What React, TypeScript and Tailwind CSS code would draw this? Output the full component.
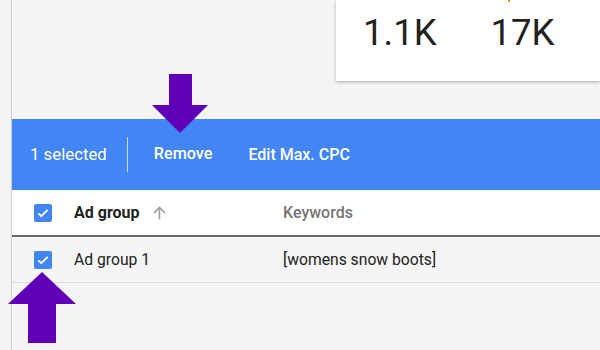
import React from 'react'

const font = { fontFamily: 'Roboto, "Liberation Sans", sans-serif' }

const Check: React.FC = () => (
  <div className="w-[18px] h-[18px] rounded-[2px] bg-[#4285f4] flex items-center justify-center">
    <svg width="14" height="14" viewBox="0 0 24 24" fill="none" stroke="white" strokeWidth="3">
      <path d="M4 12.5l5 5L20 6.5" />
    </svg>
  </div>
)

export default function App() {
  return (
    <div className="relative w-[600px] h-[350px] overflow-hidden bg-[#f4f4f4] flex" style={font}>
      <div className="w-[11px] shrink-0" />
      <div className="flex-1 border-l border-[#cfcfcf] flex flex-col">
        {/* stats card */}
        <div className="h-[119px] flex justify-end">
          <div className="w-[264px] h-[81px] bg-white shadow-[0_1px_3px_rgba(0,0,0,0.3)] flex items-start pl-[27px] pt-[11px] gap-[54px] relative">
            <span className="text-[36.5px] leading-[44px] text-[#212121]">1.1K</span>
            <span className="text-[36.5px] leading-[44px] text-[#212121]">17K</span>
            <span className="absolute left-[172px] top-0 w-[2px] h-[2px] bg-[#f29900]" />
          </div>
        </div>

        {/* selection bar */}
        <div className="h-[71px] bg-[#4285f4] flex items-center text-white">
          <span className="pl-[18px] text-[16.8px]">1 selected</span>
          <div className="ml-[20px] w-px h-[35px] bg-white/70" />
          <span className="ml-[26px] text-[16.2px] font-medium">Remove</span>
          <span className="ml-[36px] text-[16px] font-medium">Edit Max. CPC</span>
        </div>

        {/* header */}
        <div className="h-[47px] bg-white border-b-2 border-[#6b6b6b] flex items-center text-[16px]">
          <div className="pl-[22px] w-[62px]"><Check /></div>
          <div className="w-[209px] flex items-center gap-[13px]">
            <span className="font-bold text-[#212121]">Ad group</span>
            <svg width="13" height="14" viewBox="0 0 13 14" fill="none" stroke="#9e9e9e" strokeWidth="1.6">
              <path d="M6.5 13.5V1.5M1 7l5.5-5.5L12 7" />
            </svg>
          </div>
          <span className="font-medium text-[#757575]">Keywords</span>
        </div>

        {/* row */}
        <div className="h-[46px] bg-[#f5f5f5] border-b border-[#dcdcdc] flex items-center text-[15.7px] text-[#212121]">
          <div className="pl-[22px] w-[62px]"><Check /></div>
          <span className="w-[209px]">Ad group 1</span>
          <span>[womens snow boots]</span>
        </div>
      </div>

      {/* annotation arrows */}
      <svg className="absolute left-0 top-0 pointer-events-none" width="600" height="350">
        <polygon points="169,74 192,74 192,105 208,105 180,133 152,105 169,105" fill="#5f00b6" />
        <polygon points="42,272 76,304 56,304 56,343 28,343 28,304 8,304" fill="#5f00b6" />
      </svg>
    </div>
  )
}
